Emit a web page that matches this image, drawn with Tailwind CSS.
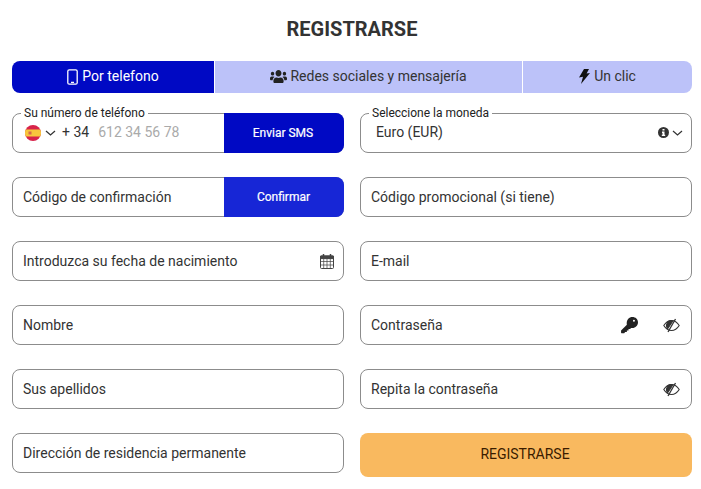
<!DOCTYPE html>
<html lang="es">
<head>
<meta charset="UTF-8">
<title>Registrarse</title>
<script src="https://cdn.jsdelivr.net/npm/@tailwindcss/browser@4"></script>
</head>
<body class="bg-white font-['Roboto',sans-serif] text-[14px] text-[#333]">
<div class="w-[701px] h-[489px] overflow-hidden pl-[12px] pr-[9px]">

  <!-- title -->
  <h1 class="h-[61px] pt-[17px] text-center text-[20px] leading-[24px] font-bold text-[#333]">REGISTRARSE</h1>

  <!-- tabs -->
  <div class="flex h-[32px] gap-px text-[14px]">
    <div class="w-[202px] flex items-center justify-center gap-[4px] rounded-l-[8px] bg-[#0009c4] pb-[1px] text-white">
      <svg width="11" height="16" viewBox="0 0 11 16" fill="none" stroke="#fff" stroke-width="1.3"><rect x=".8" y=".8" width="9.4" height="14.4" rx="1.5"/><path d="M4 13.400h3"/></svg>
      <span>Por telefono</span>
    </div>
    <div class="w-[307px] flex items-center justify-center gap-[3px] bg-[#bcc2f9] pb-[1px]">
      <svg width="17" height="15" viewBox="0 0 640 512" preserveAspectRatio="none" fill="#222"><path d="M96 224c35.300 0 64-28.700 64-64s-28.700-64-64-64-64 28.700-64 64 28.700 64 64 64zm448 0c35.300 0 64-28.700 64-64s-28.700-64-64-64-64 28.700-64 64 28.700 64 64 64zm32 32h-64c-17.600 0-33.500 7.100-45.100 18.600 40.300 22.100 68.900 62 75.100 109.400h66c17.700 0 32-14.300 32-32v-32c0-35.300-28.700-64-64-64zm-256 0c61.900 0 112-50.100 112-112S381.900 32 320 32 208 82.100 208 144s50.100 112 112 112zm76.800 32h-8.300c-20.800 10-43.900 16-68.500 16s-47.600-6-68.500-16h-8.300C179.600 288 128 339.600 128 403.200V432c0 26.500 21.500 48 48 48h288c26.500 0 48-21.500 48-48v-28.800c0-63.600-51.600-115.200-115.200-115.200zm-223.700-13.400C161.500 263.100 145.600 256 128 256H64c-35.300 0-64 28.700-64 64v32c0 17.700 14.300 32 32 32h65.900c6.300-47.400 34.900-87.300 75.200-109.400z"/></svg>
      <span>Redes sociales y mensajería</span>
    </div>
    <div class="w-[169px] flex items-center justify-center gap-[4px] rounded-r-[8px] bg-[#bcc2f9] pb-[1px]">
      <svg width="11" height="15" viewBox="0 0 11 15" fill="#111"><path d="M5 0h5L7.600 4.600 11 4 2 15l2-7.300L0 8.400z"/></svg>
      <span>Un clic</span>
    </div>
  </div>

  <!-- form -->
  <div class="grid grid-cols-[332px_332px] gap-x-[16px] gap-y-[24px] mt-[20px]">

    <div class="relative h-[40px] flex rounded-[8px] border border-[#8c8c8c]">
      <span class="absolute left-[8px] -top-[8px] bg-white px-[3px] text-[12px] leading-[14px] text-[#222]">Su número de teléfono</span>
      <div class="flex flex-1 items-center pl-[12px] pb-[1px]">
        <svg width="16" height="16" viewBox="0 0 16 16"><circle cx="8" cy="8" r="8" fill="#d8234a"/><path d="M.8 4.500h14.400a8 8 0 0 1 0 7H.8a8 8 0 0 1 0-7z" fill="#f7c63c"/><rect x="3.500" y="6.500" width="3" height="3" fill="#d8674a"/></svg>
        <svg class="ml-[4px]" width="11" height="6" viewBox="0 0 11 6" fill="none" stroke="#333" stroke-width="1.3"><path d="M1 1l4.500 4 4.500-4"/></svg>
        <span class="ml-[6px] text-[#333]">+ 34</span>
        <span class="ml-[9px] text-[#aaa]">612 34 56 78</span>
      </div>
      <button class="w-[120px] -my-px -mr-px rounded-r-[8px] bg-[#0009c4] pr-[2px] text-[12px] font-normal text-white [-webkit-text-stroke:0.2px_white]">Enviar SMS</button>
    </div>

    <div class="relative h-[40px] flex items-center justify-between rounded-[8px] border border-[#8c8c8c] pl-[15px] pr-[8px] pb-[1px]">
      <span class="absolute left-[8px] -top-[8px] bg-white px-[3px] text-[12px] leading-[14px] text-[#222]">Seleccione la moneda</span>
      <span>Euro (EUR)</span>
      <div class="flex items-center gap-[3px]">
        <svg width="11" height="11" viewBox="0 0 11 11"><circle cx="5.500" cy="5.500" r="5.500" fill="#333"/><path d="M4.500 2h2v1.600h-2zM4 4.600h2.500v3.200h.7v1.300H3.800V7.800h.7V5.900H4z" fill="#fff"/></svg>
        <svg width="11" height="6" viewBox="0 0 11 6" fill="none" stroke="#333" stroke-width="1.2"><path d="M1 1l4.500 4 4.500-4"/></svg>
      </div>
    </div>

    <div class="h-[40px] flex items-center rounded-[8px] border border-[#8c8c8c]">
      <span class="flex-1 pl-[10px]">Código de confirmación</span>
      <button class="w-[120px] h-[40px] -mr-px rounded-r-[8px] bg-[#1726d6] pr-[1px] text-[12px] font-normal text-white [-webkit-text-stroke:0.2px_white]">Confirmar</button>
    </div>
    <div class="h-[40px] flex items-center rounded-[8px] border border-[#8c8c8c] pl-[10px]">Código promocional (si tiene)</div>

    <div class="h-[40px] flex items-center justify-between rounded-[8px] border border-[#8c8c8c] pl-[10px] pr-[9px]">
      <span>Introduzca su fecha de nacimiento</span>
      <svg width="14" height="15" viewBox="0 0 14 15" fill="none" stroke="#444"><rect x=".5" y="2" width="13" height="12.500" rx="1"/><path d="M.5 2h13v2.600H.5z" fill="#444"/><path d="M3.500 0v3M10.500 0v3" stroke-width="1.500"/><path d="M.5 7.500h13M.5 11h13M3.700 4.600v10M7 4.600v10M10.300 4.600v10" stroke-width=".7"/></svg>
    </div>
    <div class="h-[40px] flex items-center rounded-[8px] border border-[#8c8c8c] pl-[10px]">E-mail</div>

    <div class="h-[40px] flex items-center rounded-[8px] border border-[#8c8c8c] pl-[10px]">Nombre</div>
    <div class="h-[40px] flex items-center rounded-[8px] border border-[#8c8c8c] pl-[10px] pr-[11px]">
      <span class="flex-1">Contraseña</span>
      <svg class="mr-[25px]" width="17" height="17" viewBox="0 0 512 512" fill="#222"><path d="M512 160c0 95-73 175-170 175-14 0-26-2-38-6l-30 34h-48v46h-50v46h-50l-30 36H16a14 14 0 0 1-14-14v-68l175-175c-4-13-5-25-5-40C172 80 245 0 342 0s170 65 170 160zM360 110a30 30 0 1 0 60 0 30 30 0 1 0-60 0z"/></svg>
      <svg width="17" height="15" viewBox="0 0 17 15" fill="none" stroke="#333" stroke-width="1.100"><path d="M.8 7.500C3 4 5.500 2.500 8.500 2.500S14 4 16.200 7.500c-2.200 3.500-4.700 5-7.700 5S3 11 .8 7.500z"/><path d="M8.500 2.500a5 5 0 0 0-3.800 8.200L9.800 3z" fill="#333"/><path d="M12.500 1L5 14" stroke-width="1.300"/></svg>
    </div>

    <div class="h-[40px] flex items-center rounded-[8px] border border-[#8c8c8c] pl-[10px]">Sus apellidos</div>
    <div class="h-[40px] flex items-center justify-between rounded-[8px] border border-[#8c8c8c] pl-[10px] pr-[11px]">
      <span>Repita la contraseña</span>
      <svg width="17" height="15" viewBox="0 0 17 15" fill="none" stroke="#333" stroke-width="1.100"><path d="M.8 7.500C3 4 5.500 2.500 8.500 2.500S14 4 16.200 7.500c-2.200 3.500-4.700 5-7.700 5S3 11 .8 7.500z"/><path d="M8.500 2.500a5 5 0 0 0-3.800 8.200L9.800 3z" fill="#333"/><path d="M12.500 1L5 14" stroke-width="1.300"/></svg>
    </div>

    <div class="h-[40px] flex items-center rounded-[8px] border border-[#8c8c8c] pl-[10px]">Dirección de residencia permanente</div>
    <button class="h-[44px] rounded-[8px] bg-[#f9b95f] pr-[2px] pb-[1px] text-[14px] text-[#3a1c00]">REGISTRARSE</button>
  </div>
</div>
</body>
</html>
